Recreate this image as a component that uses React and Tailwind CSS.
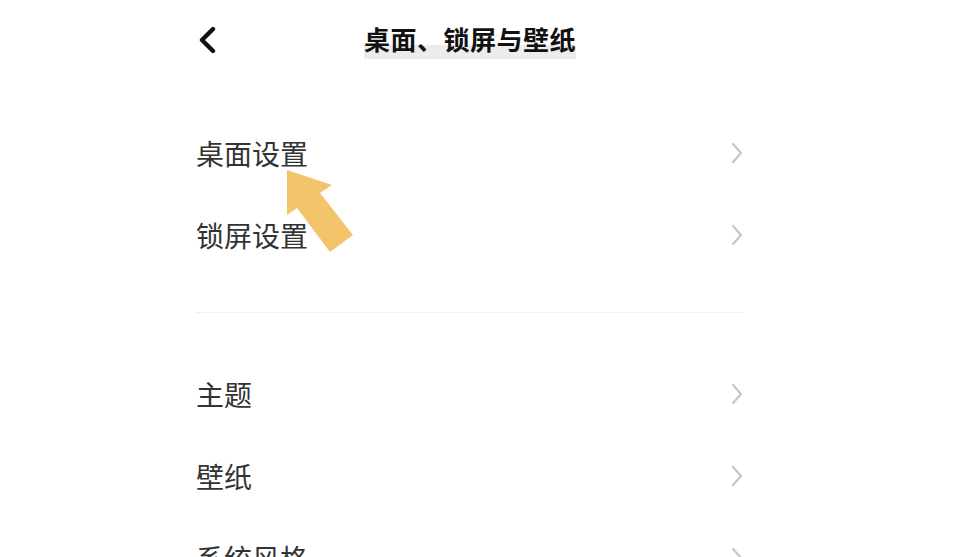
const rows1 = ["桌面设置", "锁屏设置"];
const rows2 = ["主题", "壁纸", "系统风格"];

const Chevron = () => (
  <svg width="14" height="24" viewBox="0 0 14 24" fill="none">
    <path d="M3 3l8 9-8 9" stroke="#c6c6c6" strokeWidth="2.2" strokeLinecap="round" strokeLinejoin="round" />
  </svg>
);

const Row = ({ label }) => (
  <div className="h-[82px] flex items-center justify-between">
    <span className="text-[28px] text-[#333333]">{label}</span>
    <Chevron />
  </div>
);

export default function App() {
  return (
    <div
      className="relative w-[961px] h-[557px] overflow-hidden bg-white"
      style={{ fontFamily: '"Noto Sans CJK SC", "Noto Sans", sans-serif' }}
    >
      <div className="ml-[196px] w-[548px]">
        <div className="relative h-[80px] flex items-center justify-center">
          <svg className="absolute left-[1px] top-[26px]" width="20" height="28" viewBox="0 0 20 28" fill="none">
            <path d="M16 3L5 14l11 11" stroke="#111" strokeWidth="4.4" strokeLinecap="round" strokeLinejoin="round" />
          </svg>
          <span className="mt-[2px] text-[26px] font-bold text-[#111] leading-[32px] tracking-[0.5px] bg-[linear-gradient(to_bottom,transparent_62%,#ececec_62%)] pb-[4px]">
            桌面、锁屏与壁纸
          </span>
        </div>
        <div className="pt-[32px]">
          {rows1.map((r) => (
            <Row key={r} label={r} />
          ))}
        </div>
        <div className="mt-[36px] border-t border-[#f0f0f0]" />
        <div className="pt-[40px]">
          {rows2.map((r) => (
            <Row key={r} label={r} />
          ))}
        </div>
      </div>
      <svg className="absolute left-0 top-0 pointer-events-none" width="961" height="557">
        <polygon
          points="287,170 332,185 320,193 353,235 330,252 297,208 287,215"
          fill="#f4c46c"
        />
      </svg>
    </div>
  );
}
